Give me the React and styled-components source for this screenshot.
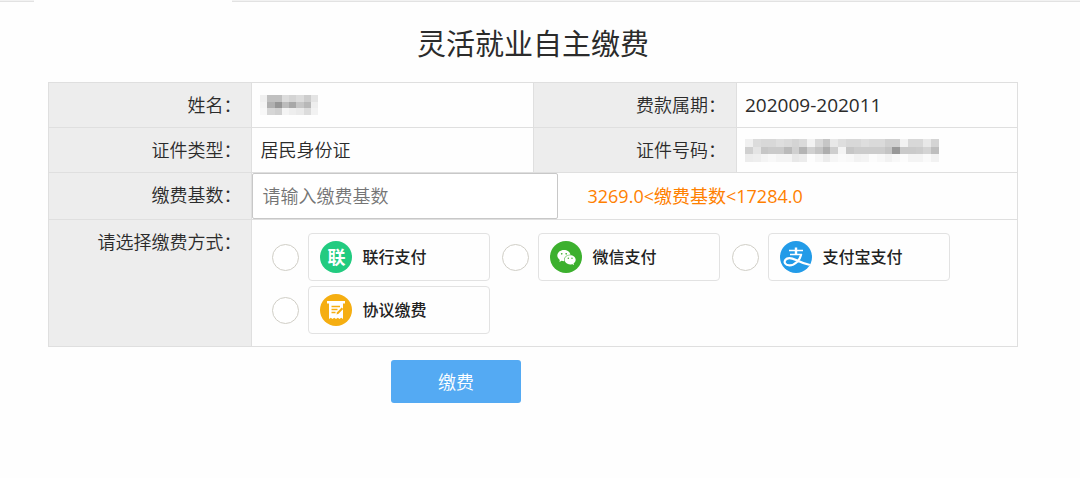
import { useState } from "react";
import styled, { createGlobalStyle } from "styled-components";
import { AiFillWechat } from "react-icons/ai";

const GlobalStyle = createGlobalStyle`
  * {
    box-sizing: border-box;
  }
  body {
    margin: 0;
    background-color: #fefefe;
    color: #2b2b2b;
    font-family: "Open Sans", "Noto Sans CJK SC", sans-serif;
    font-size: 18px;
    font-weight: 350;
    line-height: 24px;
  }
`;

const TabStrip = styled.div`
  display: flex;
  height: 2px;
`;

const TabEdge = styled.div`
  width: ${(props) => props.$width || "auto"};
  flex: ${(props) => (props.$width ? "none" : 1)};
  background-color: #f2f2f2;
  border-bottom: 1px solid #e2e2e2;
`;

const ActiveTab = styled.div`
  width: 198px;
`;

const Page = styled.form`
  padding: 22px 62px 0 48px;
`;

const Title = styled.h1`
  margin: 0;
  padding-bottom: 18px;
  font-size: 29px;
  font-weight: 400;
  line-height: 40px;
  text-align: center;
`;

const Table = styled.table`
  width: 100%;
  table-layout: fixed;
  border-collapse: collapse;
`;

const HeadCell = styled.th`
  width: 21%;
  height: ${(props) => props.$height || 45}px;
  padding: 10px;
  border: 1px solid #dfdfdf;
  background-color: #ededed;
  font-weight: 350;
  text-align: right;
  vertical-align: top;
`;

const Cell = styled.td`
  padding: ${(props) => props.$padding || "0 8px"};
  border: 1px solid #dfdfdf;
`;

const Period = styled.span`
  font-size: 19px;
  font-weight: 400;
`;

const Mask = styled.svg`
  display: block;
`;

const BaseRow = styled.div`
  display: flex;
  align-items: center;
  gap: 29px;
`;

const BaseInput = styled.input`
  width: 306px;
  height: 46px;
  padding: 0 9px;
  border: 1px solid #c8c8c8;
  border-radius: 2px;
  background-color: #fff;
  color: #333;
  font: inherit;
  &::placeholder {
    color: #757575;
    opacity: 1;
  }
`;

const Hint = styled.span`
  color: #ff8000;
  font-weight: 400;
`;

const Options = styled.div`
  display: flex;
  flex-wrap: wrap;
  gap: 5px 12px;
`;

const Option = styled.div`
  display: flex;
  align-items: center;
  gap: 9px;
`;

const Radio = styled.input`
  appearance: none;
  width: 27px;
  height: 27px;
  margin: 0;
  border: 1px solid #d0cec6;
  border-radius: 50%;
  background-color: #fff;
  &:checked {
    border: 8px solid #54aaf3;
  }
`;

const OptionLabel = styled.label`
  display: flex;
  align-items: center;
  gap: 10px;
  width: 182px;
  height: 48px;
  padding-left: 11px;
  border: 1px solid #e2e2e2;
  border-radius: 4px;
  color: #222;
  font-size: 16px;
  font-weight: 500;
  cursor: pointer;
`;

const Badge = styled.span`
  display: flex;
  align-items: center;
  justify-content: center;
  width: 32px;
  height: 32px;
  overflow: hidden;
  border-radius: 50%;
  background-color: ${(props) => props.$color};
  color: #fff;
  font-size: 18px;
  font-weight: 700;
`;

const Actions = styled.div`
  padding: 13px 0 0 343px;
`;

const SubmitButton = styled.button`
  width: 130px;
  height: 43px;
  border: none;
  border-radius: 3px;
  background-color: #54aaf3;
  color: #fff;
  font: inherit;
  cursor: pointer;
`;

const nameShades = [
  [240, 192, 192, 220, 212, 220, 205, 228],
  [244, 176, 150, 188, 168, 198, 184, 238],
  [248, 214, 208, 244, 238, 234, 220, 242],
];

const idShades = [
  [240, 220, 216, 216, 222, 218, 212, 218, 242, 216, 198, 232, 222, 216, 216, 222, 218, 218, 208, 208, 242, 216, 216, 232, 212],
  [208, 228, 198, 202, 202, 186, 208, 180, 208, 196, 174, 206, 244, 198, 204, 204, 204, 204, 196, 152, 202, 202, 204, 212, 190],
  [236, 238, 244, 248, 244, 244, 232, 236, 253, 246, 236, 246, 250, 248, 242, 244, 252, 248, 242, 248, 252, 244, 244, 250, 242],
];

function MaskedValue({ label, shades, width, height }) {
  const columns = shades[0].length;
  return (
    <Mask
      role="img"
      aria-label={label}
      width={width}
      height={height}
      viewBox={`0 0 ${columns} ${shades.length}`}
      preserveAspectRatio="none"
      shapeRendering="crispEdges"
    >
      {shades.map((row, y) =>
        row.map((shade, x) => (
          <rect
            key={`${x}-${y}`}
            x={x}
            y={y}
            width="1"
            height="1"
            fill={`rgb(${shade}, ${shade}, ${shade})`}
          />
        ))
      )}
    </Mask>
  );
}

function AlipayIcon() {
  return (
    <svg width="32" height="32" viewBox="0 0 32 32" fill="none" stroke="#fff">
      <path d="M9 9.500h14M10 13.500h12" strokeWidth="1.6" />
      <path d="M16 6.500v7" strokeWidth="2.4" />
      <path
        d="M21.300 13.200C20 19 15 24.300 9.500 24.300C5 24.300 3.800 21.300 5.300 19C7.300 16.300 12 17 16 19C21 21.500 26 23.300 32 24.500"
        strokeWidth="2.200"
      />
    </svg>
  );
}

function AgreementIcon() {
  return (
    <svg width="20" height="22" viewBox="0 0 20 22" fill="none">
      <path
        d="M1 2h18v2.5h-2V20l-1.8-1.2L13.5 20l-1.7-1.2L10 20l-1.8-1.2L6.5 20l-1.7-1.2L3 20V4.5H1z"
        fill="#fff"
      />
      <path d="M5.5 7.5H14M5.5 10.500h6M5.500 13.500h4" stroke="#f5ae11" strokeWidth="1.3" />
      <path d="M10.500 15.500l.6-2.300 4.600-4.700 1.500 1.500-4.600 4.700z" fill="#f5ae11" />
    </svg>
  );
}

const methods = [
  { id: "union", name: "联行支付", icon: <Badge $color="#22cb80">联</Badge> },
  {
    id: "wechat",
    name: "微信支付",
    icon: (
      <Badge $color="#3cb02e">
        <AiFillWechat size={21} />
      </Badge>
    ),
  },
  {
    id: "alipay",
    name: "支付宝支付",
    icon: (
      <Badge $color="#229be8">
        <AlipayIcon />
      </Badge>
    ),
  },
  {
    id: "agreement",
    name: "协议缴费",
    icon: (
      <Badge $color="#f5ae11">
        <AgreementIcon />
      </Badge>
    ),
  },
];

function App() {
  const [base, setBase] = useState("");
  const [method, setMethod] = useState("");

  return (
    <>
      <GlobalStyle />
      <TabStrip>
        <TabEdge $width="34px" />
        <ActiveTab />
        <TabEdge />
      </TabStrip>
      <Page onSubmit={(e) => e.preventDefault()}>
        <Title>灵活就业自主缴费</Title>
        <Table>
          <tbody>
            <tr>
              <HeadCell scope="row">姓名：</HeadCell>
              <Cell>
                <MaskedValue label="姓名" shades={nameShades} width={58} height={20} />
              </Cell>
              <HeadCell scope="row">费款属期：</HeadCell>
              <Cell>
                <Period>202009-202011</Period>
              </Cell>
            </tr>
            <tr>
              <HeadCell scope="row">证件类型：</HeadCell>
              <Cell>居民身份证</Cell>
              <HeadCell scope="row">证件号码：</HeadCell>
              <Cell>
                <MaskedValue label="证件号码" shades={idShades} width={194} height={23} />
              </Cell>
            </tr>
            <tr>
              <HeadCell scope="row" $height={47}>
                <label htmlFor="base">缴费基数：</label>
              </HeadCell>
              <Cell colSpan={3} $padding="0">
                <BaseRow>
                  <BaseInput
                    id="base"
                    type="text"
                    placeholder="请输入缴费基数"
                    value={base}
                    onChange={(e) => setBase(e.target.value)}
                  />
                  <Hint>3269.0&lt;缴费基数&lt;17284.0</Hint>
                </BaseRow>
              </Cell>
            </tr>
            <tr>
              <HeadCell scope="row" id="method-label">
                请选择缴费方式：
              </HeadCell>
              <Cell colSpan={3} $padding="13px 20px 12px">
                <Options role="radiogroup" aria-labelledby="method-label">
                  {methods.map(({ id, name, icon }) => (
                    <Option key={id}>
                      <Radio
                        type="radio"
                        name="method"
                        id={id}
                        checked={method === id}
                        onChange={() => setMethod(id)}
                      />
                      <OptionLabel htmlFor={id}>
                        {icon}
                        {name}
                      </OptionLabel>
                    </Option>
                  ))}
                </Options>
              </Cell>
            </tr>
          </tbody>
        </Table>
        <Actions>
          <SubmitButton type="submit">缴费</SubmitButton>
        </Actions>
      </Page>
    </>
  );
}

export default App;
